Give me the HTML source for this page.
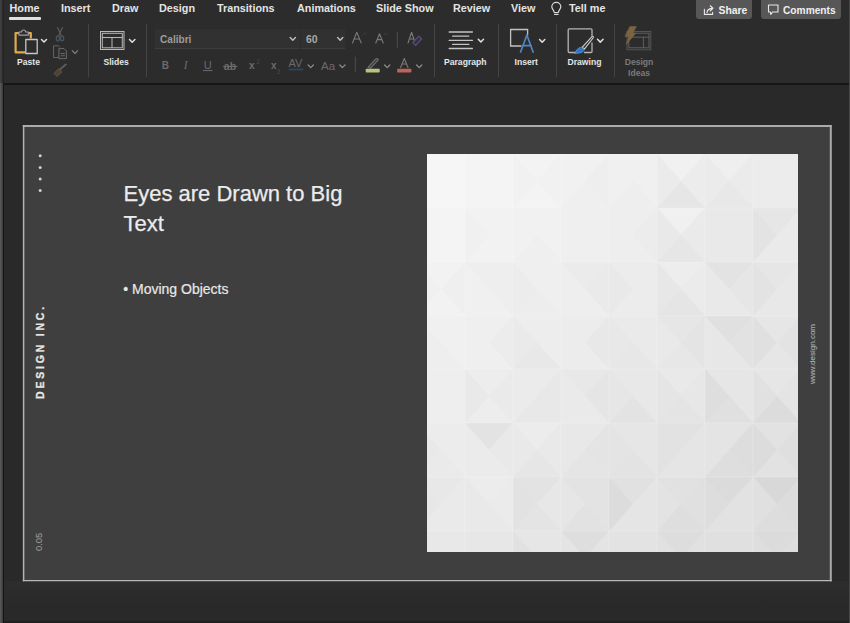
<!DOCTYPE html>
<html><head><meta charset="utf-8">
<style>
*{margin:0;padding:0;box-sizing:border-box}
html,body{width:850px;height:623px;overflow:hidden;background:#2b2b2b;font-family:"Liberation Sans",sans-serif}
.a{position:absolute}
#top{left:0;top:0;width:850px;height:83px;background:#2c2c2c}
.tab{position:absolute;top:2px;font-weight:bold;font-size:10.8px;color:#e4e4e4;white-space:nowrap;line-height:13px}
#uline{left:9px;top:17px;width:32px;height:2.5px;background:#e0e0e0;border-radius:1px}
.btn{position:absolute;top:-3px;height:22px;background:#575757;border-radius:3px;color:#f0f0f0;font-weight:bold;font-size:10.4px}
#dark{left:0;top:83px;width:850px;height:2px;background:#161616}
#pane{left:0;top:85px;width:850px;height:538px;background:#292929}
#slide{left:23px;top:125px;width:808px;height:456px;background:#3f3f3f}
.sep{position:absolute;width:1px;background:#444}
.lbl{position:absolute;font-weight:bold;font-size:8.6px;color:#e6e6e6;white-space:nowrap;line-height:11px}
.box{position:absolute;top:29px;height:20px;background:#313131;border-bottom:1px solid #3d3d3d}
svg{position:absolute;left:0;top:0}
.title{position:absolute;left:123.5px;top:179px;font-size:22px;line-height:30px;color:#ececec;white-space:nowrap;-webkit-text-stroke:0.25px #ececec}
.bul{position:absolute;left:123.2px;top:280.5px;font-size:14px;color:#e8e8e8;white-space:nowrap;-webkit-text-stroke:0.2px #e8e8e8}
.rot{position:absolute;transform-origin:0 0;transform:rotate(-90deg);white-space:nowrap}
</style></head><body>
<div id="top" class="a"></div>
<div class="tab" style="left:9.5px">Home</div>
<div id="uline" class="a"></div>
<div class="tab" style="left:61px">Insert</div>
<div class="tab" style="left:112px">Draw</div>
<div class="tab" style="left:159px">Design</div>
<div class="tab" style="left:217px">Transitions</div>
<div class="tab" style="left:297px">Animations</div>
<div class="tab" style="left:376px">Slide Show</div>
<div class="tab" style="left:453px">Review</div>
<div class="tab" style="left:511px">View</div>
<div class="tab" style="left:569px">Tell me</div>

<div class="btn" style="left:696px;width:56px"><span class="a" style="left:22.5px;top:8px">Share</span></div>
<div class="btn" style="left:761px;width:80px"><span class="a" style="left:22px;top:8px;font-size:10.2px">Comments</span></div>

<div id="dark" class="a"></div>
<div id="pane" class="a"></div>
<div class="a" style="left:0;top:581px;width:850px;height:25px;background:linear-gradient(#2d2d2d,#292929)"></div>
<div class="a" style="left:0;top:621px;width:850px;height:2px;background:#1f1f1f"></div>
<div id="slide" class="a"></div>
<svg width="850" height="623" style="position:absolute;left:0;top:0"><g stroke="#aaaaaa" fill="none">
 <path d="M22.8 126 H831.8" stroke-width="2"/>
 <path d="M23.6 125 V581.2" stroke-width="1.5" stroke="#b4b4b4"/>
 <path d="M830.8 125 V581.2" stroke-width="2"/>
 <path d="M22.8 580.6 H831.8" stroke-width="1.3" stroke="#b8b8b8"/>
</g></svg>
<div class="a" style="left:0;top:0;width:2px;height:83px;background:linear-gradient(90deg,#444,#333)"></div>
<div class="a" style="left:3px;top:0;width:1px;height:83px;background:#232323"></div>
<div class="a" style="left:0;top:83px;width:3px;height:540px;background:linear-gradient(90deg,#5c5c5c,#3a3a3a)"></div>
<div class="a" style="left:3px;top:83px;width:1px;height:540px;background:#151515"></div>
<div class="a" style="left:848.5px;top:0;width:1.5px;height:623px;background:#474747"></div>

<div class="sep" style="left:88px;top:24px;height:53px"></div>
<div class="sep" style="left:146px;top:24px;height:53px"></div>
<div class="sep" style="left:434px;top:24px;height:53px"></div>
<div class="sep" style="left:498px;top:24px;height:53px"></div>
<div class="sep" style="left:556px;top:24px;height:53px"></div>
<div class="sep" style="left:614px;top:24px;height:53px"></div>

<div class="box" style="left:155px;width:145px"></div>
<div class="box" style="left:301px;width:44px"></div>
<div class="a" style="left:160px;top:33.5px;font-weight:bold;font-size:10.1px;color:#9c9c9c">Calibri</div>
<div class="a" style="left:306px;top:33px;font-weight:bold;font-size:10.5px;color:#a8a8a8">60</div>

<div class="lbl" style="left:17px;top:57px">Paste</div>
<div class="lbl" style="left:103.5px;top:57px">Slides</div>
<div class="lbl" style="left:444px;top:57px">Paragraph</div>
<div class="lbl" style="left:514.5px;top:57px">Insert</div>
<div class="lbl" style="left:567.5px;top:57px">Drawing</div>
<div class="lbl" style="left:624.5px;top:57px;color:#7a7a7a;text-align:center;width:29px;line-height:10.5px">Design<br>Ideas</div>

<svg width="850" height="623" viewBox="0 0 850 623" fill="none" stroke-linecap="round" stroke-linejoin="round">
 <!-- bulb -->
 <path d="M554.3 12.5 C554 10 551.8 9 551.8 6.8 A4.5 4.5 0 0 1 560.8 6.8 C560.8 9 558.6 10 558.3 12.5 Z M554.5 14.3 H558.1" stroke="#d8d8d8" stroke-width="1.2"/>
 <!-- share icon -->
 <path d="M704.4 9.2 V14.4 H712.6 V12.2" stroke="#e8e8e8" stroke-width="1.1" stroke-linejoin="miter"/>
 <path d="M707 12.4 Q707.4 8.3 712.6 8.3 M710.3 5.8 L712.9 8.3 L710.3 10.8" stroke="#e8e8e8" stroke-width="1.2"/>
 <!-- comment icon -->
 <path d="M768.5 5 H778 V12 H772.5 L770.8 14.5 L770.5 12 H768.5 Z" stroke="#e8e8e8" stroke-width="1.1"/>

 <!-- clipboard -->
 <path d="M25.2 52.3 H15.6 V33 H19" stroke="#e2aa4c" stroke-width="2.2" stroke-linecap="butt"/>
 <path d="M28 33 H30.8 V38.5" stroke="#e2aa4c" stroke-width="2.2" stroke-linecap="butt"/>
 <path d="M18.9 35.2 V32 H21.6 A2 2 0 0 1 25.6 32 H28.3 V35.2 Z" stroke="#a0a0a0" stroke-width="1.2" fill="#2c2c2c"/>
 <rect x="25.8" y="39.5" width="11.4" height="14" stroke="#c6c6c6" stroke-width="1.3" fill="#2c2c2c"/>
 <path d="M41.5 39.5 L44 42 L46.5 39.5" stroke="#e0e0e0" stroke-width="1.5"/>
 <!-- scissors -->
 <path d="M57.6 27.6 L61.2 35.6 M62.4 27.6 L58.8 35.6" stroke="#5e5e5e" stroke-width="1.1"/>
 <ellipse cx="57.9" cy="38.4" rx="1.6" ry="2.4" stroke="#46535e" stroke-width="1.3"/>
 <ellipse cx="62.1" cy="38.4" rx="1.6" ry="2.4" stroke="#46535e" stroke-width="1.3"/>
 <!-- copy -->
 <path d="M58.5 57.5 H53.6 V45.8 H58.5 L59.8 47" stroke="#666" stroke-width="1"/>
 <path d="M59.3 48.6 H64 L66.4 51 V58.6 H59.3 Z M61 53.5 H64.5 M61 55.8 H64.5" stroke="#6c6c6c" stroke-width="1"/>
 <path d="M72.3 50.8 L75 53.5 L77.5 50.8" stroke="#767676" stroke-width="1.3"/>
 <!-- format painter -->
 <path d="M60.5 69 L65.8 64.5" stroke="#5a5a5a" stroke-width="2"/>
 <path d="M54.2 73.2 L58.8 68.6 L62 71.8 L57.4 76.2 Z" stroke="#65553d" stroke-width="1" fill="#4e4332"/>

 <!-- slides icon -->
 <rect x="100.5" y="31.5" width="23.5" height="18" stroke="#b8b8b8" stroke-width="1" stroke-linejoin="miter"/>
 <rect x="102.3" y="33.3" width="20" height="14.5" stroke="#b8b8b8" stroke-width="1" stroke-linejoin="miter"/>
 <path d="M102.3 37.5 H122.3 M112 37.5 V47.8" stroke="#b8b8b8" stroke-width="1"/>
 <path d="M129.5 39.5 L132.2 42.2 L134.9 39.5" stroke="#e0e0e0" stroke-width="1.5"/>

 <!-- font chevrons -->
 <path d="M290.2 37.5 L292.8 40.2 L295.4 37.5" stroke="#c0c0c0" stroke-width="1.4"/>
 <path d="M337.6 37.5 L340.2 40.2 L342.8 37.5" stroke="#c0c0c0" stroke-width="1.4"/>
 <!-- grow/shrink -->
 <path d="M352.5 43 L356.8 32.3 L361.2 43 M354.2 39 H359.5" stroke="#7a7a7a" stroke-width="1.1"/>
 <path d="M362.8 34.6 L364.5 33 L366.2 34.6" stroke="#36434f" stroke-width="0.9"/>
 <path d="M375.8 43 L379.5 33.8 L383.2 43 M377.2 39.6 H381.8" stroke="#7a7a7a" stroke-width="1.1"/>
 <path d="M384.3 33.4 L386 35 L387.7 33.4" stroke="#36434f" stroke-width="0.9"/>
 <path d="M397.3 32 V47.5" stroke="#4e4e4e" stroke-width="1"/>
 <!-- clear formatting -->
 <path d="M408 43 L411.6 32.3 L415.2 43 M409.5 39 H413.7" stroke="#7a7a7a" stroke-width="1.1"/>
 <path d="M412.8 42.5 L418.8 36.2 L421.6 39 L415.6 45.3 Z" stroke="#5b4d7b" stroke-width="1.2" fill="#352f40"/>

 <!-- row2 -->
 <g fill="#6b6b6b" font-family="Liberation Sans" font-size="11">
  <text x="161.8" y="69.4" font-weight="bold" font-size="10">B</text>
  <text x="183.8" y="69.4" font-family="Liberation Serif" font-style="italic" font-size="11.5">I</text>
  <text x="203.8" y="68.6">U</text>
  <text x="223.8" y="69.5" font-size="10.5" font-weight="bold">ab</text>
  <text x="249" y="69" font-size="10" font-weight="bold">x</text>
  <text x="271" y="69" font-size="10" font-weight="bold">x</text>
  <text x="288.6" y="67.2" font-size="11">AV</text>
  <text x="321" y="69.5" font-size="11.5">Aa</text>
 </g>
 <path d="M203.3 70.6 H212.2" stroke="#6b6b6b" stroke-width="1"/>
 <path d="M223.5 66.5 H237" stroke="#6b6b6b" stroke-width="1"/>
 <g fill="#34444f" font-family="Liberation Sans" font-size="6.5" font-weight="bold">
  <text x="256.6" y="63.5">2</text>
  <text x="277" y="73.5">2</text>
 </g>
 <path d="M289.5 69.5 H302.5" stroke="#2f4354" stroke-width="2.2" stroke-dasharray="2 1"/>
 <path d="M308.2 65 L310.8 67.6 L313.4 65" stroke="#8a8a8a" stroke-width="1.3"/>
 <path d="M339.8 65 L342.4 67.6 L345 65" stroke="#8a8a8a" stroke-width="1.3"/>
 <path d="M355.3 57 V72" stroke="#4e4e4e" stroke-width="1"/>
 <!-- highlighter -->
 <path d="M368.2 67.2 L375.6 59.2 Q377.6 57.6 378.2 59.8 L370.6 68 Z" stroke="#6c6c6c" stroke-width="1.3"/>
 <rect x="365.7" y="68.8" width="14" height="3.8" rx="0.8" fill="#bcc27c"/>
 <path d="M384.6 65 L387.2 67.6 L389.8 65" stroke="#8a8a8a" stroke-width="1.3"/>
 <!-- font color -->
 <path d="M400.6 67.5 L404.3 58.5 L408 67.5 M402 64 H406.6" stroke="#7a7a7a" stroke-width="1.1"/>
 <rect x="397.2" y="68.8" width="14.2" height="3.8" rx="0.8" fill="#c0635c"/>
 <path d="M416.6 65 L419.2 67.6 L421.8 65" stroke="#8a8a8a" stroke-width="1.3"/>

 <!-- paragraph -->
 <path d="M449.2 32 H472.4 M452.6 36.1 H468.8 M449.2 40.4 H472.4 M452.6 44.4 H468.8 M449.2 48.5 H472.4" stroke="#c4c4c4" stroke-width="1.3"/>
 <path d="M478.3 39.3 L480.9 42 L483.5 39.3" stroke="#e0e0e0" stroke-width="1.5"/>
 <!-- insert -->
 <path d="M521 46 H510.6 V29.5 H527.6 V35" stroke="#c2c2c2" stroke-width="1.3" stroke-linejoin="miter"/>
 <path d="M520.6 52 L526.9 35 L533.1 52 M522.5 45.6 H531.2" stroke="#4f86c2" stroke-width="1.7"/>
 <path d="M539.6 39.5 L542.2 42.2 L544.8 39.5" stroke="#e0e0e0" stroke-width="1.5"/>
 <!-- drawing -->
 <path d="M576 52.5 H569.2 A1 1 0 0 1 568.2 51.5 V29.8 A1 1 0 0 1 569.2 28.8 H591 A1 1 0 0 1 592 29.8 V36.2 M592 43 V51.5 A1 1 0 0 1 591 52.5 H584.5" stroke="#b4b4b4" stroke-width="1.3"/>
 <path d="M582.3 47.2 L591.8 36.9 Q593.9 35.6 593.1 38 L584.3 49.2 Z" stroke="#d4d4d4" stroke-width="1.1" fill="#2c2c2c"/>
 <path d="M575 53.2 C575.8 50.2 578.5 47.3 581.8 47.3 L584.2 49.5 C583.8 52.2 579.5 53.6 575 53.2 Z" fill="#3574bd" stroke="#5796dc" stroke-width="0.9"/>
 <path d="M597.5 39.3 L600.3 42.1 L603.1 39.3" stroke="#e0e0e0" stroke-width="1.5"/>
 <!-- design ideas -->
 <rect x="627" y="31.5" width="23.8" height="18.3" stroke="#555" stroke-width="1" stroke-linejoin="miter"/>
 <rect x="628.8" y="33.2" width="20.2" height="14.6" stroke="#606060" stroke-width="1" stroke-linejoin="miter"/>
 <path d="M628.8 37.2 H649 M643.4 37.2 V47.8" stroke="#606060" stroke-width="1"/>
 <path d="M630 26.6 L636.4 26.6 L632.8 33.2 L635.8 33.2 L626.2 44.4 L629 36.4 L625.2 36.4 Z" fill="#7a6443" stroke="#7a6443" stroke-width="0.6"/>

 <!-- slide dots -->
 <g fill="#cfcfcf">
  <circle cx="40.2" cy="155.7" r="1.5"/>
  <circle cx="40.2" cy="167.4" r="1.5"/>
  <circle cx="40.2" cy="179" r="1.5"/>
  <circle cx="40.2" cy="190.6" r="1.5"/>
 </g>
</svg>

<div class="title">Eyes are Drawn to Big<br>Text</div>
<div class="bul">• Moving Objects</div>
<div class="rot" style="left:33.5px;top:398.5px;font-weight:bold;font-size:10.5px;letter-spacing:2.8px;color:#e6e6e6;-webkit-text-stroke:0.3px #e6e6e6">DESIGN INC.</div>
<div class="rot" style="left:33px;top:551.2px;font-size:9.4px;color:#9c9c9c;-webkit-text-stroke:0.1px #9c9c9c">0.05</div>
<div class="rot" style="left:807.6px;top:384px;font-size:8px;color:#a8a8a8;-webkit-text-stroke:0.15px #a8a8a8">www.design.com</div>

<svg class="a" style="left:427px;top:154px" width="371" height="398" viewBox="427 154 371 398"><defs><linearGradient id="pg" x1="0" y1="0" x2="1" y2="1"><stop offset="0" stop-color="#f7f7f7"/><stop offset="1" stop-color="#dedede"/></linearGradient></defs><rect x="427" y="154" width="371" height="398" fill="url(#pg)"/>
<polygon points="417,154 465,154 441,181" fill="#f6f6f6"/>
<polygon points="465,154 465,208 441,181" fill="#f6f6f6"/>
<polygon points="465,208 417,208 441,181" fill="#f6f6f6"/>
<polygon points="417,208 417,154 441,181" fill="#f6f6f6"/>
<polygon points="465,154 513,154 489,181" fill="#f4f4f4"/>
<polygon points="513,154 513,208 489,181" fill="#f4f4f4"/>
<polygon points="513,208 465,208 489,181" fill="#f4f4f4"/>
<polygon points="465,208 465,154 489,181" fill="#f4f4f4"/>
<polygon points="513,154 561,154 537,181" fill="#f3f3f3"/>
<polygon points="561,154 561,208 537,181" fill="#f1f1f1"/>
<polygon points="561,208 513,208 537,181" fill="#f3f3f3"/>
<polygon points="513,208 513,154 537,181" fill="#f1f1f1"/>
<polygon points="561,154 609,154 585,181" fill="#f1f1f1"/>
<polygon points="609,154 609,208 585,181" fill="#eeeeee"/>
<polygon points="609,208 561,208 585,181" fill="#efefef"/>
<polygon points="561,208 561,154 585,181" fill="#f1f1f1"/>
<polygon points="609,154 657,154 633,181" fill="#f0f0f0"/>
<polygon points="657,154 657,208 633,181" fill="#f0f0f0"/>
<polygon points="657,208 609,208 633,181" fill="#eeeeee"/>
<polygon points="609,208 609,154 633,181" fill="#f0f0f0"/>
<polygon points="657,154 705,154 681,181" fill="#f1f1f1"/>
<polygon points="705,154 705,208 681,181" fill="#ececec"/>
<polygon points="705,208 657,208 681,181" fill="#e6e6e6"/>
<polygon points="657,208 657,154 681,181" fill="#ebebeb"/>
<polygon points="705,154 753,154 729,181" fill="#efefef"/>
<polygon points="753,154 753,208 729,181" fill="#ebebeb"/>
<polygon points="753,208 705,208 729,181" fill="#e8e8e8"/>
<polygon points="705,208 705,154 729,181" fill="#ebebeb"/>
<polygon points="753,154 801,154 777,181" fill="#ececec"/>
<polygon points="801,154 801,208 777,181" fill="#ececec"/>
<polygon points="801,208 753,208 777,181" fill="#ececec"/>
<polygon points="753,208 753,154 777,181" fill="#ececec"/>
<polygon points="417,208 465,208 441,235" fill="#f4f4f4"/>
<polygon points="465,208 465,262 441,235" fill="#f4f4f4"/>
<polygon points="465,262 417,262 441,235" fill="#f4f4f4"/>
<polygon points="417,262 417,208 441,235" fill="#f4f4f4"/>
<polygon points="465,208 513,208 489,235" fill="#f2f2f2"/>
<polygon points="513,208 513,262 489,235" fill="#f2f2f2"/>
<polygon points="513,262 465,262 489,235" fill="#f2f2f2"/>
<polygon points="465,262 465,208 489,235" fill="#f0f0f0"/>
<polygon points="513,208 561,208 537,235" fill="#f1f1f1"/>
<polygon points="561,208 561,262 537,235" fill="#f1f1f1"/>
<polygon points="561,262 513,262 537,235" fill="#efefef"/>
<polygon points="513,262 513,208 537,235" fill="#f1f1f1"/>
<polygon points="561,208 609,208 585,235" fill="#efefef"/>
<polygon points="609,208 609,262 585,235" fill="#efefef"/>
<polygon points="609,262 561,262 585,235" fill="#efefef"/>
<polygon points="561,262 561,208 585,235" fill="#efefef"/>
<polygon points="609,208 657,208 633,235" fill="#eeeeee"/>
<polygon points="657,208 657,262 633,235" fill="#ececec"/>
<polygon points="657,262 609,262 633,235" fill="#eeeeee"/>
<polygon points="609,262 609,208 633,235" fill="#eeeeee"/>
<polygon points="657,208 705,208 681,235" fill="#f0f0f0"/>
<polygon points="705,208 705,262 681,235" fill="#eaeaea"/>
<polygon points="705,262 657,262 681,235" fill="#e6e6e6"/>
<polygon points="657,262 657,208 681,235" fill="#e9e9e9"/>
<polygon points="705,208 753,208 729,235" fill="#e9e9e9"/>
<polygon points="753,208 753,262 729,235" fill="#e9e9e9"/>
<polygon points="753,262 705,262 729,235" fill="#e9e9e9"/>
<polygon points="705,262 705,208 729,235" fill="#e9e9e9"/>
<polygon points="753,208 801,208 777,235" fill="#e6e6e6"/>
<polygon points="801,208 801,262 777,235" fill="#eaeaea"/>
<polygon points="801,262 753,262 777,235" fill="#eaeaea"/>
<polygon points="753,262 753,208 777,235" fill="#e3e3e3"/>
<polygon points="417,262 465,262 441,289" fill="#f2f2f2"/>
<polygon points="465,262 465,316 441,289" fill="#efefef"/>
<polygon points="465,316 417,316 441,289" fill="#f2f2f2"/>
<polygon points="417,316 417,262 441,289" fill="#f0f0f0"/>
<polygon points="465,262 513,262 489,289" fill="#eeeeee"/>
<polygon points="513,262 513,316 489,289" fill="#eeeeee"/>
<polygon points="513,316 465,316 489,289" fill="#f0f0f0"/>
<polygon points="465,316 465,262 489,289" fill="#f0f0f0"/>
<polygon points="513,262 561,262 537,289" fill="#efefef"/>
<polygon points="561,262 561,316 537,289" fill="#efefef"/>
<polygon points="561,316 513,316 537,289" fill="#ededed"/>
<polygon points="513,316 513,262 537,289" fill="#ececec"/>
<polygon points="561,262 609,262 585,289" fill="#ebebeb"/>
<polygon points="609,262 609,316 585,289" fill="#eaeaea"/>
<polygon points="609,316 561,316 585,289" fill="#eeeeee"/>
<polygon points="561,316 561,262 585,289" fill="#eeeeee"/>
<polygon points="609,262 657,262 633,289" fill="#ececec"/>
<polygon points="657,262 657,316 633,289" fill="#ececec"/>
<polygon points="657,316 609,316 633,289" fill="#ececec"/>
<polygon points="609,316 609,262 633,289" fill="#e9e9e9"/>
<polygon points="657,262 705,262 681,289" fill="#ededed"/>
<polygon points="705,262 705,316 681,289" fill="#ebebeb"/>
<polygon points="705,316 657,316 681,289" fill="#e5e5e5"/>
<polygon points="657,316 657,262 681,289" fill="#e7e7e7"/>
<polygon points="705,262 753,262 729,289" fill="#e3e3e3"/>
<polygon points="753,262 753,316 729,289" fill="#e6e6e6"/>
<polygon points="753,316 705,316 729,289" fill="#e9e9e9"/>
<polygon points="705,316 705,262 729,289" fill="#e9e9e9"/>
<polygon points="753,262 801,262 777,289" fill="#e6e6e6"/>
<polygon points="801,262 801,316 777,289" fill="#e8e8e8"/>
<polygon points="801,316 753,316 777,289" fill="#e8e8e8"/>
<polygon points="753,316 753,262 777,289" fill="#e3e3e3"/>
<polygon points="417,316 465,316 441,342.5" fill="#f0f0f0"/>
<polygon points="465,316 465,369 441,342.5" fill="#f0f0f0"/>
<polygon points="465,369 417,369 441,342.5" fill="#eeeeee"/>
<polygon points="417,369 417,316 441,342.5" fill="#eeeeee"/>
<polygon points="465,316 513,316 489,342.5" fill="#efefef"/>
<polygon points="513,316 513,369 489,342.5" fill="#ececec"/>
<polygon points="513,369 465,369 489,342.5" fill="#efefef"/>
<polygon points="465,369 465,316 489,342.5" fill="#efefef"/>
<polygon points="513,316 561,316 537,342.5" fill="#ededed"/>
<polygon points="561,316 561,369 537,342.5" fill="#ededed"/>
<polygon points="561,369 513,369 537,342.5" fill="#e8e8e8"/>
<polygon points="513,369 513,316 537,342.5" fill="#eaeaea"/>
<polygon points="561,316 609,316 585,342.5" fill="#ececec"/>
<polygon points="609,316 609,369 585,342.5" fill="#e8e8e8"/>
<polygon points="609,369 561,369 585,342.5" fill="#ececec"/>
<polygon points="561,369 561,316 585,342.5" fill="#ececec"/>
<polygon points="609,316 657,316 633,342.5" fill="#eaeaea"/>
<polygon points="657,316 657,369 633,342.5" fill="#eaeaea"/>
<polygon points="657,369 609,369 633,342.5" fill="#e7e7e7"/>
<polygon points="609,369 609,316 633,342.5" fill="#e8e8e8"/>
<polygon points="657,316 705,316 681,342.5" fill="#e6e6e6"/>
<polygon points="705,316 705,369 681,342.5" fill="#e4e4e4"/>
<polygon points="705,369 657,369 681,342.5" fill="#e7e7e7"/>
<polygon points="657,369 657,316 681,342.5" fill="#e9e9e9"/>
<polygon points="705,316 753,316 729,342.5" fill="#e0e0e0"/>
<polygon points="753,316 753,369 729,342.5" fill="#e2e2e2"/>
<polygon points="753,369 705,369 729,342.5" fill="#e7e7e7"/>
<polygon points="705,369 705,316 729,342.5" fill="#e7e7e7"/>
<polygon points="753,316 801,316 777,342.5" fill="#e6e6e6"/>
<polygon points="801,316 801,369 777,342.5" fill="#e3e3e3"/>
<polygon points="801,369 753,369 777,342.5" fill="#e6e6e6"/>
<polygon points="753,369 753,316 777,342.5" fill="#e0e0e0"/>
<polygon points="417,369 465,369 441,396" fill="#eeeeee"/>
<polygon points="465,369 465,423 441,396" fill="#eeeeee"/>
<polygon points="465,423 417,423 441,396" fill="#eeeeee"/>
<polygon points="417,423 417,369 441,396" fill="#eeeeee"/>
<polygon points="465,369 513,369 489,396" fill="#ededed"/>
<polygon points="513,369 513,423 489,396" fill="#eaeaea"/>
<polygon points="513,423 465,423 489,396" fill="#ededed"/>
<polygon points="465,423 465,369 489,396" fill="#e9e9e9"/>
<polygon points="513,369 561,369 537,396" fill="#ebebeb"/>
<polygon points="561,369 561,423 537,396" fill="#e8e8e8"/>
<polygon points="561,423 513,423 537,396" fill="#e8e8e8"/>
<polygon points="513,423 513,369 537,396" fill="#ebebeb"/>
<polygon points="561,369 609,369 585,396" fill="#e8e8e8"/>
<polygon points="609,369 609,423 585,396" fill="#e5e5e5"/>
<polygon points="609,423 561,423 585,396" fill="#eaeaea"/>
<polygon points="561,423 561,369 585,396" fill="#eaeaea"/>
<polygon points="609,369 657,369 633,396" fill="#e8e8e8"/>
<polygon points="657,369 657,423 633,396" fill="#e8e8e8"/>
<polygon points="657,423 609,423 633,396" fill="#e3e3e3"/>
<polygon points="609,423 609,369 633,396" fill="#e6e6e6"/>
<polygon points="657,369 705,369 681,396" fill="#e9e9e9"/>
<polygon points="705,369 705,423 681,396" fill="#e7e7e7"/>
<polygon points="705,423 657,423 681,396" fill="#e4e4e4"/>
<polygon points="657,423 657,369 681,396" fill="#e5e5e5"/>
<polygon points="705,369 753,369 729,396" fill="#e6e6e6"/>
<polygon points="753,369 753,423 729,396" fill="#e6e6e6"/>
<polygon points="753,423 705,423 729,396" fill="#e0e0e0"/>
<polygon points="705,423 705,369 729,396" fill="#dedede"/>
<polygon points="753,369 801,369 777,396" fill="#e6e6e6"/>
<polygon points="801,369 801,423 777,396" fill="#e4e4e4"/>
<polygon points="801,423 753,423 777,396" fill="#dcdcdc"/>
<polygon points="753,423 753,369 777,396" fill="#e1e1e1"/>
<polygon points="417,423 465,423 441,450" fill="#ececec"/>
<polygon points="465,423 465,477 441,450" fill="#ececec"/>
<polygon points="465,477 417,477 441,450" fill="#eaeaea"/>
<polygon points="417,477 417,423 441,450" fill="#e9e9e9"/>
<polygon points="465,423 513,423 489,450" fill="#e3e3e3"/>
<polygon points="513,423 513,477 489,450" fill="#e9e9e9"/>
<polygon points="513,477 465,477 489,450" fill="#ebebeb"/>
<polygon points="465,477 465,423 489,450" fill="#ebebeb"/>
<polygon points="513,423 561,423 537,450" fill="#ececec"/>
<polygon points="561,423 561,477 537,450" fill="#e9e9e9"/>
<polygon points="561,477 513,477 537,450" fill="#e6e6e6"/>
<polygon points="513,477 513,423 537,450" fill="#e9e9e9"/>
<polygon points="561,423 609,423 585,450" fill="#e8e8e8"/>
<polygon points="609,423 609,477 585,450" fill="#e4e4e4"/>
<polygon points="609,477 561,477 585,450" fill="#e5e5e5"/>
<polygon points="561,477 561,423 585,450" fill="#e8e8e8"/>
<polygon points="609,423 657,423 633,450" fill="#e6e6e6"/>
<polygon points="657,423 657,477 633,450" fill="#e6e6e6"/>
<polygon points="657,477 609,477 633,450" fill="#e3e3e3"/>
<polygon points="609,477 609,423 633,450" fill="#e4e4e4"/>
<polygon points="657,423 705,423 681,450" fill="#e2e2e2"/>
<polygon points="705,423 705,477 681,450" fill="#e5e5e5"/>
<polygon points="705,477 657,477 681,450" fill="#e5e5e5"/>
<polygon points="657,477 657,423 681,450" fill="#e2e2e2"/>
<polygon points="705,423 753,423 729,450" fill="#e4e4e4"/>
<polygon points="753,423 753,477 729,450" fill="#dddddd"/>
<polygon points="753,477 705,477 729,450" fill="#dedede"/>
<polygon points="705,477 705,423 729,450" fill="#e4e4e4"/>
<polygon points="753,423 801,423 777,450" fill="#e2e2e2"/>
<polygon points="801,423 801,477 777,450" fill="#dfdfdf"/>
<polygon points="801,477 753,477 777,450" fill="#e2e2e2"/>
<polygon points="753,477 753,423 777,450" fill="#dcdcdc"/>
<polygon points="417,477 465,477 441,504" fill="#e8e8e8"/>
<polygon points="465,477 465,531 441,504" fill="#eaeaea"/>
<polygon points="465,531 417,531 441,504" fill="#eaeaea"/>
<polygon points="417,531 417,477 441,504" fill="#e7e7e7"/>
<polygon points="465,477 513,477 489,504" fill="#ececec"/>
<polygon points="513,477 513,531 489,504" fill="#ebebeb"/>
<polygon points="513,531 465,531 489,504" fill="#e9e9e9"/>
<polygon points="465,531 465,477 489,504" fill="#e9e9e9"/>
<polygon points="513,477 561,477 537,504" fill="#e3e3e3"/>
<polygon points="561,477 561,531 537,504" fill="#e7e7e7"/>
<polygon points="561,531 513,531 537,504" fill="#e4e4e4"/>
<polygon points="513,531 513,477 537,504" fill="#e2e2e2"/>
<polygon points="561,477 609,477 585,504" fill="#e3e3e3"/>
<polygon points="609,477 609,531 585,504" fill="#e3e3e3"/>
<polygon points="609,531 561,531 585,504" fill="#e2e2e2"/>
<polygon points="561,531 561,477 585,504" fill="#e6e6e6"/>
<polygon points="609,477 657,477 633,504" fill="#e1e1e1"/>
<polygon points="657,477 657,531 633,504" fill="#e5e5e5"/>
<polygon points="657,531 609,531 633,504" fill="#e5e5e5"/>
<polygon points="609,531 609,477 633,504" fill="#dcdcdc"/>
<polygon points="657,477 705,477 681,504" fill="#e1e1e1"/>
<polygon points="705,477 705,531 681,504" fill="#e0e0e0"/>
<polygon points="705,531 657,531 681,504" fill="#dedede"/>
<polygon points="657,531 657,477 681,504" fill="#e3e3e3"/>
<polygon points="705,477 753,477 729,504" fill="#dbdbdb"/>
<polygon points="753,477 753,531 729,504" fill="#e2e2e2"/>
<polygon points="753,531 705,531 729,504" fill="#e2e2e2"/>
<polygon points="705,531 705,477 729,504" fill="#dddddd"/>
<polygon points="753,477 801,477 777,504" fill="#d8d8d8"/>
<polygon points="801,477 801,531 777,504" fill="#dcdcdc"/>
<polygon points="801,531 753,531 777,504" fill="#dddddd"/>
<polygon points="753,531 753,477 777,504" fill="#e0e0e0"/>
<polygon points="417,531 465,531 441,558" fill="#e8e8e8"/>
<polygon points="465,531 465,585 441,558" fill="#e8e8e8"/>
<polygon points="465,585 417,585 441,558" fill="#e8e8e8"/>
<polygon points="417,585 417,531 441,558" fill="#e8e8e8"/>
<polygon points="465,531 513,531 489,558" fill="#e7e7e7"/>
<polygon points="513,531 513,585 489,558" fill="#e7e7e7"/>
<polygon points="513,585 465,585 489,558" fill="#e7e7e7"/>
<polygon points="465,585 465,531 489,558" fill="#e7e7e7"/>
<polygon points="513,531 561,531 537,558" fill="#e6e6e6"/>
<polygon points="561,531 561,585 537,558" fill="#e6e6e6"/>
<polygon points="561,585 513,585 537,558" fill="#e6e6e6"/>
<polygon points="513,585 513,531 537,558" fill="#e1e1e1"/>
<polygon points="561,531 609,531 585,558" fill="#dedede"/>
<polygon points="609,531 609,585 585,558" fill="#e4e4e4"/>
<polygon points="609,585 561,585 585,558" fill="#e4e4e4"/>
<polygon points="561,585 561,531 585,558" fill="#e4e4e4"/>
<polygon points="609,531 657,531 633,558" fill="#e3e3e3"/>
<polygon points="657,531 657,585 633,558" fill="#e3e3e3"/>
<polygon points="657,585 609,585 633,558" fill="#dfdfdf"/>
<polygon points="609,585 609,531 633,558" fill="#e3e3e3"/>
<polygon points="657,531 705,531 681,558" fill="#dddddd"/>
<polygon points="705,531 705,585 681,558" fill="#e1e1e1"/>
<polygon points="705,585 657,585 681,558" fill="#e1e1e1"/>
<polygon points="657,585 657,531 681,558" fill="#e1e1e1"/>
<polygon points="705,531 753,531 729,558" fill="#e0e0e0"/>
<polygon points="753,531 753,585 729,558" fill="#e0e0e0"/>
<polygon points="753,585 705,585 729,558" fill="#e0e0e0"/>
<polygon points="705,585 705,531 729,558" fill="#e0e0e0"/>
<polygon points="753,531 801,531 777,558" fill="#dbdbdb"/>
<polygon points="801,531 801,585 777,558" fill="#dedede"/>
<polygon points="801,585 753,585 777,558" fill="#dedede"/>
<polygon points="753,585 753,531 777,558" fill="#dedede"/>
<path d="M465 154V552" stroke="#fff" stroke-opacity="0.2" stroke-width="1"/>
<path d="M513 154V552" stroke="#fff" stroke-opacity="0.2" stroke-width="1"/>
<path d="M561 154V552" stroke="#fff" stroke-opacity="0.2" stroke-width="1"/>
<path d="M609 154V552" stroke="#fff" stroke-opacity="0.2" stroke-width="1"/>
<path d="M657 154V552" stroke="#fff" stroke-opacity="0.2" stroke-width="1"/>
<path d="M705 154V552" stroke="#fff" stroke-opacity="0.2" stroke-width="1"/>
<path d="M753 154V552" stroke="#fff" stroke-opacity="0.2" stroke-width="1"/>
<path d="M427 208H798" stroke="#fff" stroke-opacity="0.2" stroke-width="1"/>
<path d="M427 262H798" stroke="#fff" stroke-opacity="0.2" stroke-width="1"/>
<path d="M427 316H798" stroke="#fff" stroke-opacity="0.2" stroke-width="1"/>
<path d="M427 369H798" stroke="#fff" stroke-opacity="0.2" stroke-width="1"/>
<path d="M427 423H798" stroke="#fff" stroke-opacity="0.2" stroke-width="1"/>
<path d="M427 477H798" stroke="#fff" stroke-opacity="0.2" stroke-width="1"/>
<path d="M427 531H798" stroke="#fff" stroke-opacity="0.2" stroke-width="1"/>
</svg>

</body></html>
